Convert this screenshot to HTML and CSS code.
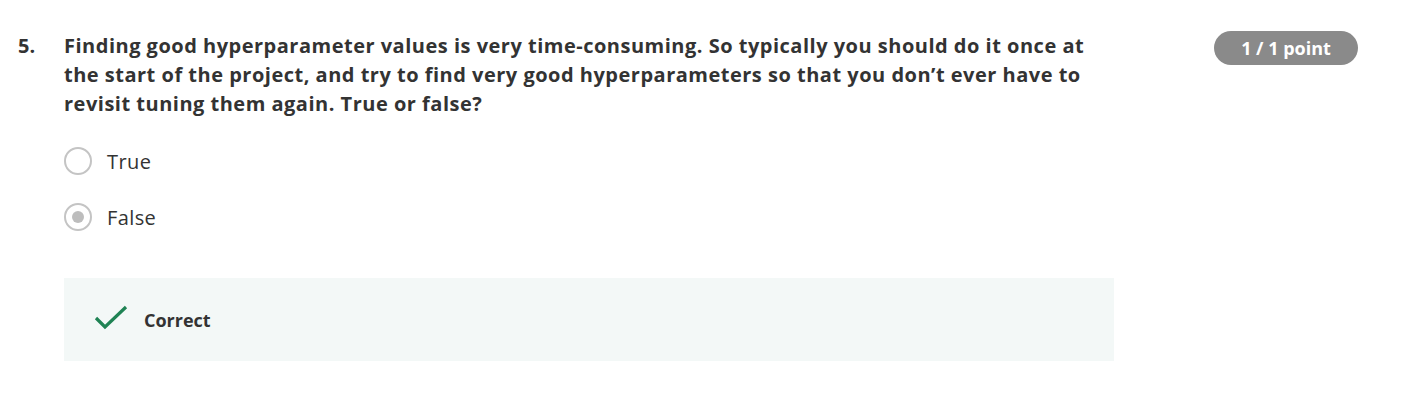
FILE: index.html
```html
<!DOCTYPE html>
<html>
<head>
<meta charset="utf-8">
<link rel="stylesheet" href="styles.css">
</head>
<body>
<div class="question">
  <div class="num">5.</div>
  <div class="body">
    <div class="prompt">Finding good hyperparameter values is very time-consuming. So typically you should do it once at the start of the project, and try to find very good hyperparameters so that you don’t ever have to revisit tuning them again. True or false?</div>
    <div class="options">
      <div class="option"><span class="radio"></span><span class="label">True</span></div>
      <div class="option"><span class="radio checked"></span><span class="label">False</span></div>
    </div>
    <div class="feedback">
      <svg class="check" width="34" height="26" viewBox="0 0 34 26"><path d="M2 13 L11 22 L32 2" fill="none" stroke="#1f8354" stroke-width="3.2"/></svg>
      <span class="fb-text">Correct</span>
    </div>
  </div>
  <div class="badge-col"><span class="badge">1 / 1 point</span></div>
</div>
</body>
</html>
```
FILE: styles.css
```css
html, body { margin: 0; padding: 0; background: #fff; }
body { font-family: "Open Sans", sans-serif; color: #1f1f1f; }
.question { display: flex; padding: 31px 0 0 18px; }
.num { width: 46px; font-weight: 700; font-size: 20px; line-height: 29px; color: #333; }
.body { width: 1050px; }
.prompt { font-weight: 700; font-size: 20px; line-height: 29px; color: #333; width: 1048px; letter-spacing: 0.5px; }
.options { margin-top: 28px; display: flex; flex-direction: column; gap: 26px; }
.option { display: flex; align-items: center; height: 30px; }
.radio { width: 24px; height: 24px; border: 2px solid #c4c4c4; border-radius: 50%; box-sizing: content-box; display: flex; align-items: center; justify-content: center; }
.radio.checked::after { content: ""; width: 12px; height: 12px; border-radius: 50%; background: #bdbdbd; }
.label { margin-left: 15px; font-size: 20px; color: #333; letter-spacing: 0.4px; }
.feedback { margin-top: 46px; height: 83px; background: #f3f8f7; display: flex; align-items: center; padding-left: 30px; }
.check { margin-right: 16px; margin-top: -3px; }
.fb-text { font-weight: 700; font-size: 18px; color: #333; }
.badge-col { margin-left: 100px; }
.badge { display: inline-block; background: #8a8a8a; color: #fff; font-weight: 700; font-size: 18px; height: 34px; line-height: 34px; width: 144px; text-align: center; border-radius: 17px; }
```
